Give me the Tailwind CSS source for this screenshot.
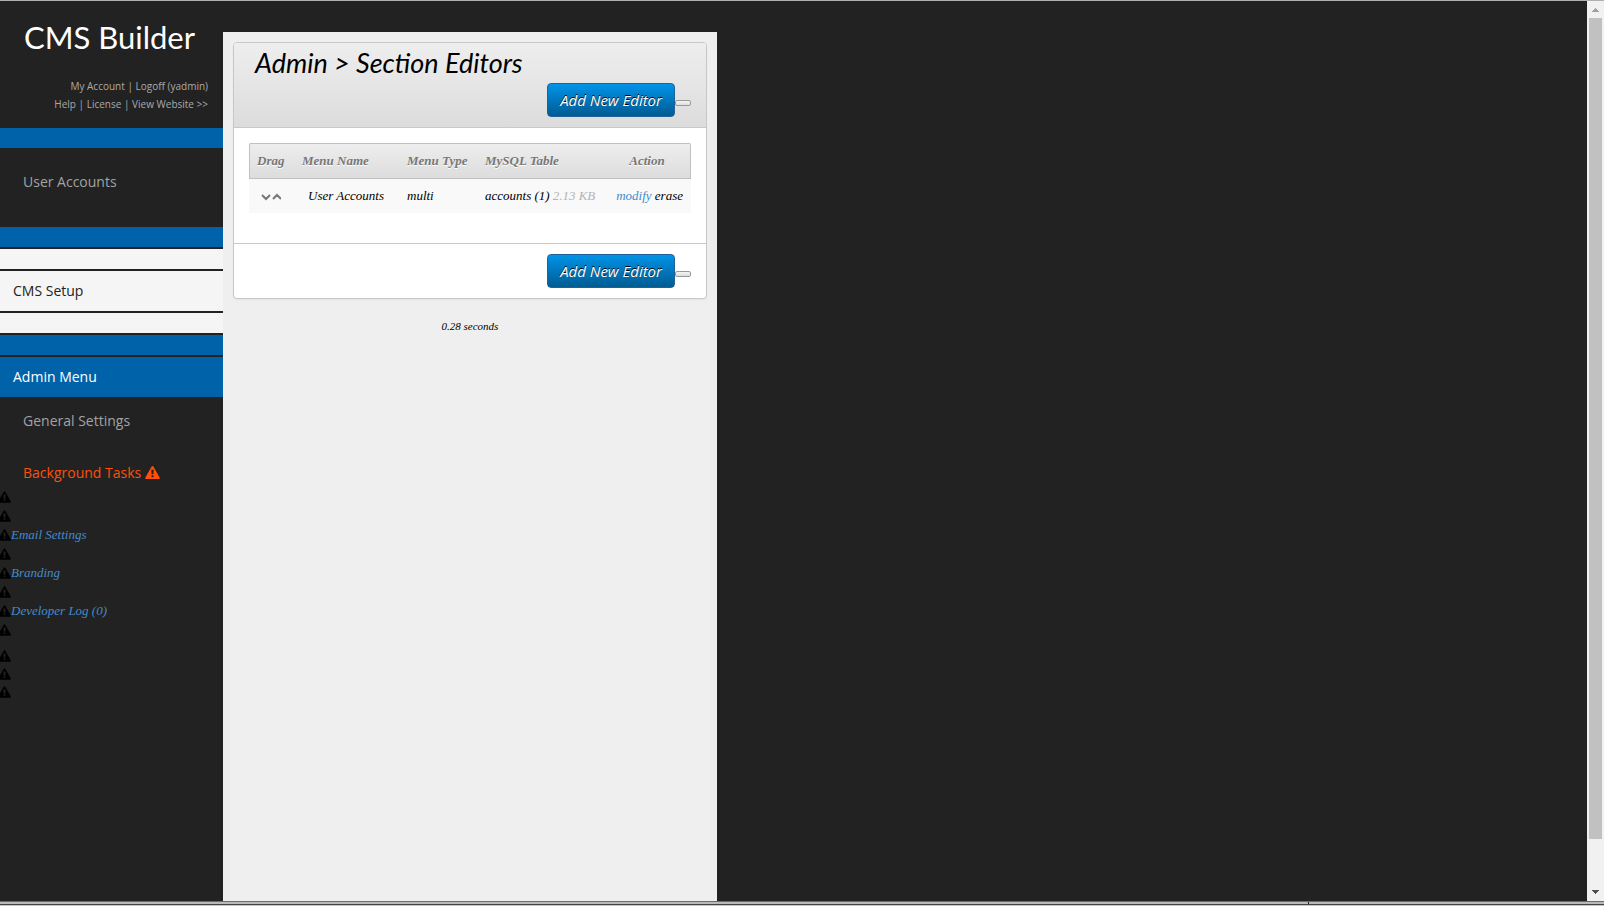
<!DOCTYPE html>
<html lang="en">
<head>
<meta charset="utf-8">
<title>CMS Builder</title>
<script src="https://cdn.jsdelivr.net/npm/@tailwindcss/browser@4"></script>
</head>
<body class="flex h-screen flex-col overflow-hidden bg-[#222] font-['Liberation_Serif',serif] text-[13px] leading-[19px] text-black">
<svg class="hidden" aria-hidden="true">
  <symbol id="warn" viewBox="0 0 16 14"><path fill="currentColor" fill-rule="evenodd" d="M8 0c.5 0 .9.3 1.1.7l6.600 11.600c.5.8-.1 1.700-1 1.700H1.300C.4 14-.2 13.100.3 12.300L6.900.7C7.100.3 7.500 0 8 0zM6.700 4l.3 5h2l.3-5zM7 10v2h2v-2z"/></symbol>
</svg>
<div class="flex min-h-0 flex-1 border-t border-[#b0b0b0]">
  <aside class="w-[223px] shrink-0 font-['Open_Sans',sans-serif] text-sm leading-5">
    <h1 class="h-[76px] pl-6 pt-4 font-[Lato,sans-serif] text-[31px] leading-10 text-white">CMS Builder</h1>
    <nav class="h-[51px] pr-[15px] text-right text-[10px] leading-[18px] text-[#aaa]">
      <div><a href="#account">My Account</a> | <a href="#logoff">Logoff (yadmin)</a></div>
      <div><a href="#help">Help</a> | <a href="#license">License</a> | <a href="#website">View Website &gt;&gt;</a></div>
    </nav>
    <nav>
      <div class="h-5 bg-[#0062a8]"></div>
      <a href="#users" class="block h-[79px] px-[23px] pt-6 text-[#a3a3a3]">User Accounts</a>
      <div class="flex flex-col gap-0.5">
        <div class="h-5 bg-[#0062a8]"></div>
        <div class="h-5 bg-[#f5f5f5]"></div>
        <a href="#setup" class="block bg-[#f5f5f5] px-[13px] py-2.5 text-[#222]">CMS Setup</a>
        <div class="h-5 bg-[#f5f5f5]"></div>
        <div class="h-5 bg-[#0062a8]"></div>
        <a href="#admin" class="block bg-[#0062a8] px-[13px] py-2.5 font-medium text-white">Admin Menu</a>
      </div>
      <a href="#general" class="block px-[23px] pb-4 pt-[14px] text-[#a3a3a3]">General Settings</a>
      <a href="#tasks" class="flex items-center gap-1 px-[23px] pb-1 pt-4 text-[#ff4f0a]">Background Tasks <svg class="mb-0.5 h-[13px] w-[15px]"><use href="#warn"/></svg></a>
      <ul class="font-['Liberation_Serif',serif] text-[13px] italic leading-[19px] text-[#428bca]">
        <li class="flex h-[19px] items-center"><svg class="-ml-0.5 h-3 w-[13px] shrink-0 text-black"><use href="#warn"/></svg></li>
        <li class="flex h-[19px] items-center"><svg class="-ml-0.5 h-3 w-[13px] shrink-0 text-black"><use href="#warn"/></svg></li>
        <li class="flex h-[19px] items-center"><svg class="-ml-0.5 h-3 w-[13px] shrink-0 text-black"><use href="#warn"/></svg><a href="#email">Email Settings</a></li>
        <li class="flex h-[19px] items-center"><svg class="-ml-0.5 h-3 w-[13px] shrink-0 text-black"><use href="#warn"/></svg></li>
        <li class="flex h-[19px] items-center"><svg class="-ml-0.5 h-3 w-[13px] shrink-0 text-black"><use href="#warn"/></svg><a href="#branding">Branding</a></li>
        <li class="flex h-[19px] items-center"><svg class="-ml-0.5 h-3 w-[13px] shrink-0 text-black"><use href="#warn"/></svg></li>
        <li class="flex h-[19px] items-center"><svg class="-ml-0.5 h-3 w-[13px] shrink-0 text-black"><use href="#warn"/></svg><a href="#log">Developer Log (0)</a></li>
        <li class="flex h-[19px] items-center"><svg class="-ml-0.5 h-3 w-[13px] shrink-0 text-black"><use href="#warn"/></svg></li>
        <li class="mt-2 flex h-[18px] items-center"><svg class="-ml-0.5 h-3 w-[13px] shrink-0 text-black"><use href="#warn"/></svg></li>
        <li class="flex h-[18px] items-center"><svg class="-ml-0.5 h-3 w-[13px] shrink-0 text-black"><use href="#warn"/></svg></li>
        <li class="flex h-[18px] items-center"><svg class="-ml-0.5 h-3 w-[13px] shrink-0 text-black"><use href="#warn"/></svg></li>
      </ul>
    </nav>
  </aside>
  <main class="mt-[31px] w-[494px] shrink-0 bg-[#efefef] p-2.5 italic">
    <section class="overflow-hidden rounded border border-[#c8c8c8] bg-white shadow-xs">
      <header class="border-b border-[#c8c8c8] bg-linear-to-b from-[#eee] to-[#dcdcdc] pb-2.5 pl-[21px] pr-[15px] pt-1">
        <h2 class="h-9 font-[Lato,sans-serif] text-[27px] leading-8">Admin &gt; Section Editors</h2>
        <div class="flex h-[34px] items-center justify-end">
          <button class="h-[34px] rounded border border-[#22609a] bg-linear-to-b from-[#0094ea] to-[#005c92] px-3 font-['Open_Sans',sans-serif] text-[15px] italic text-white text-shadow-[0_-1px_0_#000]">Add New Editor</button>
          <button aria-label="More" class="mt-1.5 h-1.5 w-4 rounded-xs border border-[#999] bg-linear-to-b from-[#f5f5f5] to-[#ddd]"></button>
        </div>
      </header>
      <div class="px-[15px] pb-[30px] pt-[15px]">
        <table class="w-full table-fixed border-separate border-spacing-0 text-left">
          <colgroup><col class="w-[45px]"><col class="w-[105px]"><col class="w-[78px]"><col><col class="w-[87px]"></colgroup>
          <thead>
            <tr class="h-9 bg-linear-to-b from-[#eee] to-[#dcdcdc] text-[#777] text-shadow-[0_1px_0_#fff]">
              <th class="rounded-tl-xs border-y border-l border-[#c0c0c0] pb-0.5 pl-[7px]">Drag</th>
              <th class="border-y border-[#c0c0c0] pb-0.5 pl-2">Menu Name</th>
              <th class="border-y border-[#c0c0c0] pb-0.5 pl-2">Menu Type</th>
              <th class="border-y border-[#c0c0c0] pb-0.5 pl-2">MySQL Table</th>
              <th class="rounded-tr-xs border-y border-r border-[#c0c0c0] pb-0.5 text-center">Action</th>
            </tr>
          </thead>
          <tbody>
            <tr class="h-[34px] whitespace-nowrap bg-[#f9f9f9]">
              <td class="pl-3"><svg class="mt-0.5 h-2 w-5 text-[#777]" viewBox="0 0 20 8" fill="none" stroke="currentColor" stroke-width="2"><path d="M1 2l4 4 4-4M12 6l4-4 4 4"/></svg></td>
              <td class="pb-0.5 pl-[14px]">User Accounts</td>
              <td class="pb-0.5 pl-2">multi</td>
              <td class="pb-0.5 pl-2"><div class="flex gap-[3px]"><span>accounts (1)</span><span class="text-[#b3b3b3]">2.13 KB</span></div></td>
              <td class="pb-0.5 pr-2 text-right"><a href="#modify" class="text-[#428bca]">modify</a> <a href="#erase">erase</a></td>
            </tr>
          </tbody>
        </table>
      </div>
      <footer class="flex items-center justify-end border-t border-[#c8c8c8] py-2.5 pr-[15px]">
        <button class="h-[34px] rounded border border-[#22609a] bg-linear-to-b from-[#0094ea] to-[#005c92] px-3 font-['Open_Sans',sans-serif] text-[15px] italic text-white text-shadow-[0_-1px_0_#000]">Add New Editor</button>
        <button aria-label="More" class="mt-1.5 h-1.5 w-4 rounded-xs border border-[#999] bg-linear-to-b from-[#f5f5f5] to-[#ddd]"></button>
      </footer>
    </section>
    <p class="mt-[18px] text-center text-[11px]">0.28 seconds</p>
  </main>
  <div class="ml-auto flex w-[17px] flex-col items-center bg-[#f1f1f1]">
    <svg class="h-[17px] w-[17px] shrink-0" viewBox="0 0 17 17"><path fill="#a0a0a0" d="M8 7h1v1h1v1h1v1h1v1H5v-1h1V9h1V8h1z"/></svg>
    <div class="w-[13px] flex-1 bg-[#c1c1c1]"></div>
    <div class="flex h-[62px] shrink-0 items-end"><svg class="h-[17px] w-[17px]" viewBox="0 0 17 17"><path fill="#505050" d="M5 6h7v1h-1v1h-1v1H9v1H8V9H7V8H6V7H5z"/></svg></div>
  </div>
</div>
<div class="h-[5px] shrink-0 border-t border-[#2080c8] bg-[#b9b9b9]">
  <div class="flex h-0.5 justify-end"><div class="mr-[295px] w-px bg-[#222]"></div></div>
  <div class="h-px bg-[#444]"></div>
  <div class="h-px bg-[#c8c4c4]"></div>
</div>
</body>
</html>
